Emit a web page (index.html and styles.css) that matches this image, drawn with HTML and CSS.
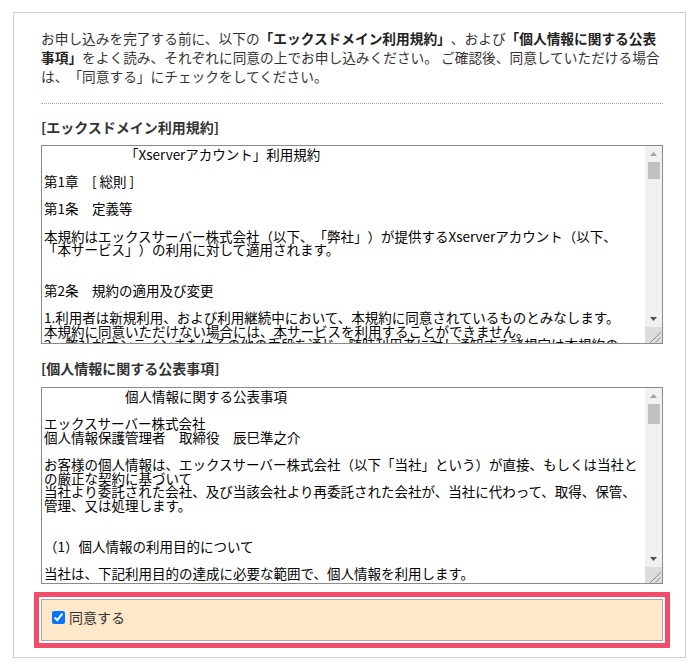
FILE: index.html
```html
<!DOCTYPE html>
<html lang="ja">
<head>
<meta charset="utf-8">
<title>利用規約への同意</title>
<link rel="stylesheet" href="styles.css">
</head>
<body>
<div class="panel">
  <p class="intro">お申し込みを完了する前に、以下の<strong>「エックスドメイン利用規約」</strong>、および<strong>「個人情報に関する公表事項」</strong>をよく読み、それぞれに同意の上でお申し込みください。 ご確認後、同意していただける場合は、「同意する」にチェックをしてください。</p>
  <div class="sep"></div>
  <h3 class="heading">[エックスドメイン利用規約]</h3>
  <div class="termbox termbox-a">
    <textarea class="terms" readonly>　　　　　　「Xserverアカウント」利用規約

第1章　[ 総則 ]

第1条　定義等

本規約はエックスサーバー株式会社（以下、「弊社」）が提供するXserverアカウント（以下、
「本サービス」）の利用に対して適用されます。


第2条　規約の適用及び変更

1.利用者は新規利用、および利用継続中において、本規約に同意されているものとみなします。
本規約に同意いただけない場合には、本サービスを利用することができません。
2．弊社がオンラインまたはその他の手段を通じ、随時利用者に対し通知する諸規定は本規約の
一部を構成するものとします。
3．弊社は、利用者の承諾を得ることなく、本規約を変更できるものとします。この場合、本サービ
スの利用条件は変更後の規約によるものとします。


第3条　通知

1．弊社から利用者への通知は、本規約に特段の定めのない限り、電子メール、書面または本サ
ービスのウェブサイトに掲載するなど、弊社が適当と判断する方法により行います。
2．前項の規定に基づき、弊社から利用者への通知を電子メールの送信または本サービスのウェ
ブサイトへの掲載の方法により行う場合には、当該通知は、それぞれ電子メールの送信または
ウェブサイトへの掲載がなされた時点から効力を生じるものとします。


第2章　[ 契約 ]

第4条　申込

1．本サービスの利用申込者（以下「申込者」）は、本規約の内容を承諾の上、弊社所定の方法
により本サービスの利用を申し込むものとします。
2．申込者は、申込みにあたり、真実かつ正確な情報を弊社に提供しなければなりません。


第5条　利用契約の成立

1．利用契約は、申込者が前条に定める申込みを行い、弊社がこれを承諾した時点で成立するも
のとします。
2．弊社は、申込者が次の各号のいずれかに該当する場合、申込みを承諾しないことがありま
す。
（1）申込みの内容に虚偽の記載、誤記または記入漏れがあった場合
（2）過去に本規約違反等により利用契約を解除されたことがある場合
（3）その他弊社が不適当と判断した場合


第6条　アカウント情報の管理

1．利用者は、本サービスのログインに必要なID及びパスワード（以下「アカウント情報」）を
自己の責任において管理するものとします。
2．アカウント情報の管理不十分、使用上の過誤、第三者の使用等による損害の責任は利用者が
負うものとし、弊社は一切の責任を負いません。


第7条　変更の届出

利用者は、弊社に届け出た氏名、住所、電子メールアドレスその他の事項に変更があった場合
には、速やかに弊社所定の方法により届け出るものとします。


第3章　[ 利用 ]

第8条　禁止事項

利用者は、本サービスの利用にあたり、次の各号に該当する行為を行ってはならないものとし
ます。
（1）法令または公序良俗に違反する行為
（2）弊社または第三者の権利を侵害する行為
（3）本サービスの運営を妨げる行為
（4）その他弊社が不適切と判断する行為


第9条　サービスの停止

弊社は、設備の保守、障害その他やむを得ない事由がある場合、利用者に事前に通知すること
なく本サービスの全部または一部の提供を停止することができるものとします。


第10条　免責

弊社は、本サービスの利用により利用者に生じた損害について、弊社の故意または重大な過失
による場合を除き、一切の責任を負わないものとします。


第11条　準拠法及び管轄裁判所

本規約の準拠法は日本法とし、本サービスに関して紛争が生じた場合には、弊社の本店所在地
を管轄する地方裁判所を第一審の専属的合意管轄裁判所とします。


附則

本規約は、所定の日より施行します。</textarea>
    <div class="vscroll" aria-hidden="true">
      <div class="sb-btn"><svg width="17" height="16" viewBox="0 0 17 16"><path d="M5 10h7L8.5 6z" fill="#a3a3a3"/></svg></div>
      <div class="sb-track"><div class="sb-thumb"></div></div>
      <div class="sb-btn"><svg width="17" height="16" viewBox="0 0 17 16"><path d="M5 6h7L8.5 10z" fill="#505050"/></svg></div>
      <div class="sb-corner"><svg width="17" height="16" viewBox="0 0 17 16"><path d="M15.5 5.5l-10 10M15.5 10.5l-5 5" stroke="#8c8c8c" stroke-width="1" fill="none"/></svg></div>
    </div>
  </div>
  <h3 class="heading heading-b">[個人情報に関する公表事項]</h3>
  <div class="termbox termbox-b">
    <textarea class="terms" readonly>　　　　　　個人情報に関する公表事項

エックスサーバー株式会社
個人情報保護管理者　取締役　辰巳準之介

お客様の個人情報は、エックスサーバー株式会社（以下「当社」という）が直接、もしくは当社と
の厳正な契約に基づいて
当社より委託された会社、及び当該会社より再委託された会社が、当社に代わって、取得、保管、
管理、又は処理します。


（1）個人情報の利用目的について

当社は、下記利用目的の達成に必要な範囲で、個人情報を利用します。

・当社サービスの提供、ご本人様の確認、料金の請求及びお支払いの確認のため
・当社サービスに関するお問い合わせへの対応のため
・当社サービスの新機能、更新情報、キャンペーン等のご案内のため
・当社サービスの改善、新サービスの開発のため
・利用規約に違反する行為への対応のため


（2）個人情報の第三者提供について

当社は、次の場合を除き、あらかじめご本人様の同意を得ることなく、個人情報を第三者に
提供することはありません。
・法令に基づく場合
・人の生命、身体または財産の保護のために必要がある場合であって、ご本人様の同意を得
ることが困難である場合
・国の機関もしくは地方公共団体またはその委託を受けた者が法令の定める事務を遂行する
ことに対して協力する必要がある場合


（3）個人情報の委託について

当社は、利用目的の達成に必要な範囲内において、個人情報の取扱いの全部または一部を委託
する場合があります。この場合、当社は、委託先として十分な個人情報の保護水準を満たして
いる者を選定し、委託先に対する必要かつ適切な監督を行います。


（4）開示等の請求について

ご本人様は、当社に対し、ご自身の個人情報の利用目的の通知、開示、内容の訂正、追加また
は削除、利用の停止、消去及び第三者への提供の停止を請求することができます。
請求を行う場合は、当社所定の窓口までご連絡ください。


（5）個人情報を提供されることの任意性について

個人情報の提供は任意ですが、必要な情報をご提供いただけない場合、当社サービスをご利用
いただけないことがあります。


（6）安全管理措置について

当社は、個人情報の漏えい、滅失またはき損の防止その他の安全管理のために、必要かつ適切
な措置を講じます。


（7）お問い合わせ窓口

エックスサーバー株式会社　個人情報お問い合わせ窓口
受付時間　平日10:00～18:00</textarea>
    <div class="vscroll" aria-hidden="true">
      <div class="sb-btn"><svg width="17" height="16" viewBox="0 0 17 16"><path d="M5 10h7L8.5 6z" fill="#a3a3a3"/></svg></div>
      <div class="sb-track"><div class="sb-thumb sb-thumb-b"></div></div>
      <div class="sb-btn"><svg width="17" height="16" viewBox="0 0 17 16"><path d="M5 6h7L8.5 10z" fill="#505050"/></svg></div>
      <div class="sb-corner"><svg width="17" height="16" viewBox="0 0 17 16"><path d="M15.5 5.5l-10 10M15.5 10.5l-5 5" stroke="#8c8c8c" stroke-width="1" fill="none"/></svg></div>
    </div>
  </div>
  <label class="agree">
    <input type="checkbox" class="agree-check" checked>
    <span class="agree-text">同意する</span>
  </label>
</div>
</body>
</html>
```
FILE: styles.css
```css
html, body {
  margin: 0;
  padding: 0;
  background: #ffffff;
}

body {
  font-family: "Noto Sans CJK JP", "Noto Sans", sans-serif;
  color: #333333;
  text-spacing-trim: space-all;
}

.panel {
  box-sizing: border-box;
  width: 673px;
  margin: 12px 0 0 13px;
  padding: 16px 22px 16px 27px;
  border: 1px solid #cfcfcf;
  box-shadow: 0 1px 1px rgba(0, 0, 0, 0.08);
  background: #ffffff;
}

.intro {
  margin: 0;
  font-size: 13.7px;
  line-height: 19px;
  color: #333333;
}

.intro strong {
  font-weight: bold;
  color: #222222;
}

.sep {
  margin-top: 17px;
  border-top: 1px dotted #a8a8a8;
}

.heading {
  margin: 14px 0 0;
  font-size: 14px;
  line-height: 19px;
  font-weight: bold;
  color: #333333;
}

.heading-b {
  margin-top: 15px;
}

.termbox {
  display: flex;
  box-sizing: border-box;
  margin-top: 8px;
  border: 1px solid #8a8a8a;
  background: #ffffff;
}

.termbox-a {
  height: 199px;
}

.termbox-b {
  height: 197px;
  margin-top: 9px;
}

.terms {
  flex: 1;
  min-width: 0;
  box-sizing: border-box;
  height: 100%;
  margin: 0;
  padding: 2px;
  border: 0;
  border-radius: 0;
  font-family: "Noto Sans CJK JP", sans-serif;
  font-size: 13.5px;
  line-height: 13.6px;
  color: #000000;
  background: #ffffff;
  overflow-y: auto;
  scrollbar-width: none;
  resize: none;
  outline: none;
  text-spacing-trim: space-all;
}

.vscroll {
  display: flex;
  flex-direction: column;
  flex: none;
  width: 17px;
  background: #f1f1f1;
}

.sb-btn {
  flex: none;
  height: 16px;
}

.sb-btn svg,
.sb-corner svg {
  display: block;
}

.sb-track {
  flex: 1;
  padding: 0 2px 0 3px;
}

.sb-thumb {
  height: 17px;
  background: #c1c1c1;
}

.sb-thumb-b {
  height: 20px;
}

.sb-corner {
  flex: none;
  height: 16px;
  background: #dcdcdc;
}

.agree {
  display: flex;
  align-items: center;
  gap: 4px;
  box-sizing: border-box;
  height: 42px;
  margin-top: 15px;
  padding: 0 10px 5px;
  border: 1px solid #a9a9a9;
  background: #ffe8c9;
  box-shadow: 0 0 0 2px #ffffff, 0 0 0 7px #f24c6b;
  cursor: pointer;
}

.agree-check {
  width: 13px;
  height: 13px;
  margin: 0;
  accent-color: #0075ff;
}

.agree-text {
  font-size: 14px;
  line-height: 19px;
  color: #333333;
}
```
